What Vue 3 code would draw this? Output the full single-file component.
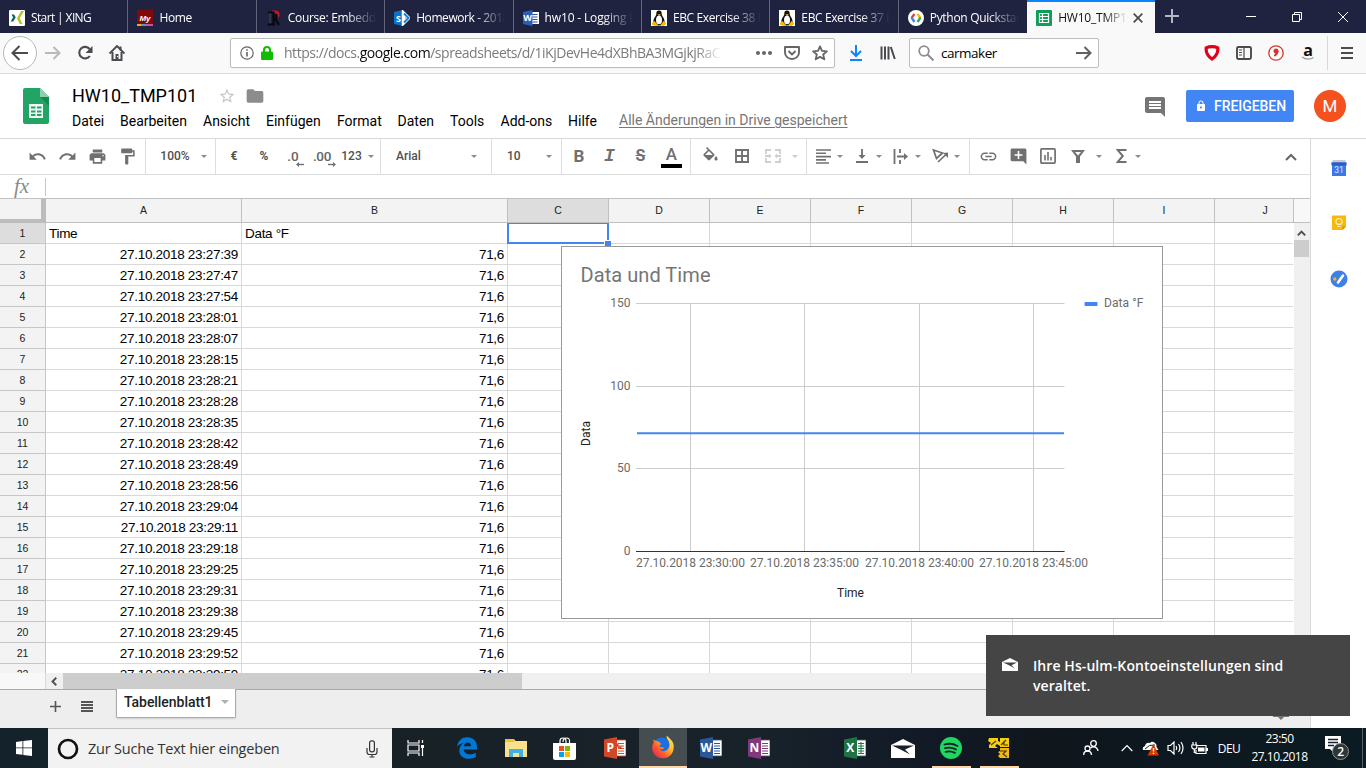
<script setup>
const tabs = [
  { t: 'Start | XING', k: 'xing', s: -0.62 },
  { t: 'Home', k: 'my', s: -0.35 },
  { t: 'Course: Embedded', k: 'rose', s: -0.3 },
  { t: 'Homework - 2018', k: 'share', s: -0.42 },
  { t: 'hw10 - Logging L', k: 'word', s: -0.15 },
  { t: 'EBC Exercise 38 Li', k: 'tux', s: -0.38 },
  { t: 'EBC Exercise 37 Li', k: 'tux', s: -0.38 },
  { t: 'Python Quickstart', k: 'goog', s: -0.3 }
]
const menus = ['Datei', 'Bearbeiten', 'Ansicht', 'Einfügen', 'Format', 'Daten', 'Tools', 'Add-ons', 'Hilfe']
const times = ['27:39', '27:47', '27:54', '28:01', '28:07', '28:15', '28:21', '28:28', '28:35', '28:42', '28:49', '28:56',
  '29:04', '29:11', '29:18', '29:25', '29:31', '29:38', '29:45', '29:52', '29:59']
const rows = [['Time', 'Data °F'], ...times.map(t => ['27.10.2018 23:' + t, '71,6'])]
const cols = ['A', 'B', 'C', 'D', 'E', 'F', 'G', 'H', 'I', 'J']
const xTicks = [[129, '27.10.2018 23:30:00'], [243, '27.10.2018 23:35:00'], [358, '27.10.2018 23:40:00'], [472, '27.10.2018 23:45:00']]
const yTicks = [[57, '150'], [140, '100'], [222, '50'], [305, '0']]
const p = {
  undo: 'M12.5 8c-2.65 0-5.05.99-6.9 2.6L2 7v9h9l-3.62-3.62c1.39-1.16 3.16-1.88 5.12-1.88 3.54 0 6.55 2.31 7.6 5.5l2.37-.78C21.08 11.03 17.15 8 12.5 8z',
  redo: 'M18.4 10.6C16.55 8.99 14.15 8 11.5 8c-4.65 0-8.58 3.03-9.96 7.22L3.9 16c1.05-3.19 4.05-5.5 7.6-5.5 1.95 0 3.73.72 5.12 1.88L13 16h9V7l-3.6 3.6z',
  print: 'M19 8H5c-1.66 0-3 1.34-3 3v6h4v4h12v-4h4v-6c0-1.66-1.34-3-3-3zm-3 11H8v-5h8v5zm3-7c-.55 0-1-.45-1-1s.45-1 1-1 1 .45 1 1-.45 1-1 1zm-1-9H6v4h12V3z',
  paint: 'M18 4V3c0-.55-.45-1-1-1H5c-.55 0-1 .45-1 1v4c0 .55.45 1 1 1h12c.55 0 1-.45 1-1V6h1v4H9v11c0 .55.45 1 1 1h2c.55 0 1-.45 1-1v-9h8V4h-3z',
  fill: 'M16.56 8.94L7.62 0 6.21 1.41l2.38 2.38-5.15 5.15c-.59.59-.59 1.54 0 2.12l5.5 5.5c.29.29.68.44 1.06.44s.77-.15 1.06-.44l5.5-5.5c.59-.58.59-1.53 0-2.12zM5.21 10L10 5.21 14.79 10H5.21zM19 11.5s-2 2.17-2 3.5c0 1.1.9 2 2 2s2-.9 2-2c0-1.33-2-3.5-2-3.5z',
  link: 'M3.9 12c0-1.71 1.39-3.1 3.1-3.1h4V7H7c-2.76 0-5 2.24-5 5s2.24 5 5 5h4v-1.9H7c-1.71 0-3.1-1.39-3.1-3.1zM8 13h8v-2H8v2zm9-6h-4v1.9h4c1.71 0 3.1 1.39 3.1 3.1s-1.39 3.1-3.1 3.1h-4V17h4c2.76 0 5-2.24 5-5s-2.24-5-5-5z',
  addc: 'M22 4c0-1.1-.9-2-2-2H4c-1.1 0-2 .9-2 2v12c0 1.1.9 2 2 2h14l4 4V4zM17 11h-4v4h-2v-4H7V9h4V5h2v4h4v2z',
  folder: 'M10 4H4c-1.1 0-1.99.9-1.99 2L2 18c0 1.1.9 2 2 2h16c1.1 0 2-.9 2-2V8c0-1.1-.9-2-2-2h-8l-2-2z',
  comment: 'M21.99 4c0-1.1-.89-2-1.99-2H4c-1.1 0-2 .9-2 2v12c0 1.1.9 2 2 2h14l4 4-.01-18zM18 14H6v-2h12v2zm0-3H6V9h12v2zm0-3H6V6h12v2z',
  lock: 'M18 8h-1V6c0-2.76-2.24-5-5-5S7 3.24 7 6v2H6c-1.1 0-2 .9-2 2v10c0 1.1.9 2 2 2h12c1.1 0 2-.9 2-2V10c0-1.1-.9-2-2-2zm-6 9c-1.1 0-2-.9-2-2s.9-2 2-2 2 .9 2 2-.9 2-2 2zm3.1-9H8.9V6c0-1.71 1.39-3.1 3.1-3.1 1.71 0 3.1 1.39 3.1 3.1v2z',
  star: 'M22 9.24l-7.19-.62L12 2 9.19 8.63 2 9.24l5.46 4.73L5.82 21 12 17.27 18.18 21l-1.63-7.03L22 9.24zM12 15.4l-3.76 2.27 1-4.28-3.32-2.88 4.38-.38L12 6.1l1.71 4.04 4.38.38-3.32 2.88 1 4.28L12 15.4z'
}
const office = {
  ppt: { c: '#d24726', l: 'P' },
  word: { c: '#2b579a', l: 'W' },
  one: { c: '#80397b', l: 'N' },
  excel: { c: '#1f7244', l: 'X' }
}
const apps = ['view', 'edge', 'files', 'store', 'ppt', 'fox', 'word', 'one', '', 'excel', 'mail', 'spot', 'vnc']
</script>

<template>
  <div class="screen">
    <div class="tabbar">
      <div v-for="(t, i) in tabs" :key="i" class="tab">
        <svg width="16" height="16" viewBox="0 0 16 16">
          <g v-if="t.k === 'xing'"><rect width="16" height="16" rx="1" fill="#fff" /><path d="M2.500 4.500h2.600l1.600 2.800L4.300 11.500H1.700l2.400-4.200z" fill="#0a6468" /><path d="M12.200 1H15l-4.300 7.200L13.500 14h-2.800L7.900 8.200z" fill="#b0c923" /></g>
          <g v-else-if="t.k === 'my'"><rect width="16" height="16" fill="#7e0a0e" /><text x="8" y="10.500" class="my">My</text><rect y="14" width="4" height="2" fill="#e8b020" /><rect x="4" y="14" width="4" height="2" fill="#4aa0c8" /><rect x="8" y="14" width="8" height="2" fill="#d0509a" /></g>
          <g v-else-if="t.k === 'rose'" fill="none"><path d="M6 2h4q3.500 1 1.500 5" stroke="#c41728" stroke-width="3" /><path d="M2 2.500h5.500v12M1.500 14.500h8M7 9h2.500l3.500 6M9 8.500q2.500-1 1-4.500" stroke="#08080c" stroke-width="2.200" /><path d="M4 3v10" stroke="#4a4b58" /></g>
          <g v-else-if="t.k === 'share'"><path d="M0 2L9 0v16l-9-2z" fill="#0a72c8" /><path d="M9.500 3l5 5-5 5z" fill="none" stroke="#fff" stroke-width="3.500" /><path d="M10 3.500l4.500 4.500L10 12.500" fill="none" stroke="#1580d4" stroke-width="2" /><text x="4.500" y="11.500" class="ic-l">S</text></g>
          <g v-else-if="t.k === 'word'"><path d="M8 2h8v12H8z" fill="#fff" /><path d="M9.500 4.500h5M9.500 7h5M9.500 9.500h5M9.500 12h5" stroke="#2b579a" /><path d="M0 2L9.500 0v16L0 14z" fill="#2b5fb4" /><text x="4.700" y="11" class="ic-l">W</text></g>
          <g v-else-if="t.k === 'tux'"><rect width="16" height="16" fill="#fff" /><path d="M8 .5c2.200 0 2.700 1.500 2.700 3.500 0 2 3 4 3 8.500 0 2-3 3-5.700 3s-5.700-1-5.700-3c0-4.500 3-6.500 3-8.500S5.800.5 8 .5z" fill="#111" /><ellipse cx="8" cy="10" rx="3" ry="4.300" fill="#fff" /><path d="M6.500 4.500L8.500 4l1.300 1-1.700 1.200z" fill="#f0b400" /><path d="M1 13l2.500-2 3.500 4-2 1-4-1zM15 13l-2.500-2-3 4 2.500 1 3-1.500z" fill="#f5bd00" /></g>
          <g v-else><circle cx="8" cy="8" r="8" fill="#fff" /><g fill="none" stroke-width="2.400"><path d="M6.500 4L3.500 8" stroke="#e94235" /><path d="M3.500 7.500l3 4.500" stroke="#4285f4" /><path d="M9.500 4l3 4" stroke="#fbbc05" /><path d="M12.500 7.500l-3 4.500" stroke="#34a853" /></g></g>
        </svg>
        <span class="tt" :style="{ letterSpacing: t.s + 'px' }">{{ t.t }}</span>
      </div>
      <div class="tab active">
        <svg width="16" height="16" viewBox="0 0 16 16"><rect width="16" height="16" rx="1" fill="#109d58" /><path d="M3.500 3.500h9v9h-9zM3.500 6.500h9M3.500 9.500h9M6.500 3.500v9" fill="none" stroke="#fff" stroke-width="1.200" /></svg>
        <span class="tt short">HW10_TMP101</span>
        <svg class="x" width="10" height="10" viewBox="0 0 10 10"><path d="M.7.7l8.600 8.600M9.300.7L.7 9.300" stroke="#4a4a4f" stroke-width="1.700" /></svg>
      </div>
      <svg class="plus" width="14" height="14" viewBox="0 0 14 14"><path d="M7 0v14M0 7h14" stroke="#b5b6c2" stroke-width="2" /></svg>
      <div class="wctl">
        <svg width="12" height="12" viewBox="0 0 12 12"><path d="M1 5.500h10" stroke="#fff" /></svg>
        <svg width="12" height="12" viewBox="0 0 12 12"><path d="M1.500 3.500h7v7h-7zM3.500 3V1.500h7v7H9" fill="none" stroke="#fff" /></svg>
        <svg width="12" height="12" viewBox="0 0 12 12"><path d="M1 1l10 10M11 1L1 11" stroke="#fff" /></svg>
      </div>
    </div>

    <div class="nav">
      <svg class="back" width="36" height="36" viewBox="0 0 36 36"><circle cx="18" cy="18" r="16.500" fill="#fff" stroke="#b8b8b8" /><path d="M26 18H11M17.500 11L10.500 18l7 7" fill="none" stroke="#4a4a4f" stroke-width="2" /></svg>
      <div class="navi">
        <svg width="16" height="16" viewBox="0 0 16 16"><path d="M0 8h14M8.500 2l6 6-6 6" fill="none" stroke="#b9b9bb" stroke-width="2" /></svg>
        <svg width="16" height="16" viewBox="0 0 16 16"><path d="M12.800 11A5.800 5.800 0 1 1 12.600 4" fill="none" stroke="#4a4a4f" stroke-width="2.100" /><path d="M15.500 1v7h-7z" fill="#4a4a4f" /></svg>
        <svg width="16" height="16" viewBox="0 0 16 16"><path d="M.5 8.500L8 1l7.500 7.500" fill="none" stroke="#4a4a4f" stroke-width="1.900" /><path d="M3.500 7v8h9V7M11.500 1.500v4" fill="none" stroke="#4a4a4f" stroke-width="2" /><path d="M6.500 9h3v6h-3z" fill="#4a4a4f" /><path d="M8 11.500h1" stroke="#fff" /></svg>
      </div>
      <div class="url">
        <svg width="14" height="14" viewBox="0 0 14 14"><circle cx="7" cy="7" r="6.200" fill="none" stroke="#656568" stroke-width="1.200" /><path d="M7 6v4.500M7 3.300v1.500" stroke="#656568" stroke-width="1.600" /></svg>
        <svg class="lk" width="14" height="14" viewBox="0 0 14 14"><rect x="1" y="5.500" width="12" height="8.500" rx="1" fill="#12bc00" /><path d="M4 6V4a3 3 0 0 1 6 0v2" fill="none" stroke="#12bc00" stroke-width="2" /></svg>
        <span class="ut">https://docs.<b>google.com</b>/spreadsheets/d/1iKjDevHe4dXBhBA3MGjkjRaC</span>
        <div class="ui">
          <svg width="16" height="16" viewBox="0 0 16 16" fill="#656568"><circle cx="2" cy="8" r="2" /><circle cx="8" cy="8" r="2" /><circle cx="14" cy="8" r="2" /></svg>
          <svg width="16" height="16" viewBox="0 0 16 16" fill="none" stroke="#656568" stroke-width="1.900"><path d="M1 2h14v5.500a7 6.500 0 0 1-14 0z" stroke-linejoin="round" /><path d="M4.500 6L8 9.500 11.500 6" /></svg>
          <svg width="16" height="16" viewBox="0 0 16 16"><path d="M8 1.400l2 4.400 4.900.5-3.700 3.200 1.100 4.800L8 11.900l-4.300 2.400 1.100-4.800L1.100 6.300 6 5.800z" fill="none" stroke="#656568" stroke-width="1.800" stroke-linejoin="round" /></svg>
        </div>
      </div>
      <svg class="dl" width="14" height="16" viewBox="0 0 14 16"><path d="M7 0v11M2 6l5 5 5-5M1 15h12" fill="none" stroke="#0a84ff" stroke-width="2" /></svg>
      <svg class="lib" width="16" height="16" viewBox="0 0 16 16"><path d="M1.500 1.500v13M5 1.500v13M8.500 1.500v13M10.800 2l4 12" stroke="#4a4a4f" stroke-width="2" /></svg>
      <div class="search">
        <svg width="16" height="16" viewBox="0 0 16 16"><circle cx="6" cy="6" r="4.800" fill="none" stroke="#8d8d8f" stroke-width="1.800" /><path d="M9.500 9.500l6 6" stroke="#8d8d8f" stroke-width="2" /></svg>
        <span>carmaker</span>
        <svg width="16" height="16" viewBox="0 0 16 16"><path d="M0 8h14M8.500 2l6 6-6 6" fill="none" stroke="#606064" stroke-width="2" /></svg>
      </div>
      <div class="ext">
        <svg width="16" height="16" viewBox="0 0 16 16"><path d="M8 1.700c2 0 3.800.2 5.800 1.200.5 4.500-1.800 8.400-5.800 11.100C4 11.300 1.700 7.400 2.200 2.900 4.200 1.900 6 1.700 8 1.700z" fill="#fff" stroke="#e2001a" stroke-width="3.200" /></svg>
        <svg width="16" height="16" viewBox="0 0 16 16"><rect x="1" y="2" width="14" height="12" rx="1.500" fill="none" stroke="#4a4a4f" stroke-width="1.900" /><path d="M8 2v12M3 5h3M3 7.500h3M3 10h3" stroke="#4a4a4f" stroke-width="1.200" /></svg>
        <svg width="16" height="16" viewBox="0 0 16 16"><circle cx="8" cy="8" r="7.200" fill="#fff" stroke="#d5352b" stroke-width="1.300" /><circle cx="8" cy="6" r="2.500" fill="#d5352b" /><path d="M9.500 6q0 3-3.200 5" stroke="#d5352b" stroke-width="2" fill="none" /></svg>
        <svg width="16" height="16" viewBox="0 0 16 16"><text x="8" y="10.500" class="amz">a</text><path d="M2 12q6 4 11.500.5" stroke="#999" stroke-width="1.400" fill="none" /></svg>
      </div>
      <div class="ham"><svg width="12" height="12" viewBox="0 0 12 12"><path d="M0 1h12M0 6h12M0 11h12" stroke="#4a4a4f" stroke-width="2" /></svg></div>
    </div>

    <div class="dochead">
      <svg class="logo" width="26" height="36" viewBox="0 0 26 36"><path d="M2 0h15l9 9v25a2 2 0 0 1-2 2H2a2 2 0 0 1-2-2V2a2 2 0 0 1 2-2z" fill="#21a464" /><path d="M17 9h9v9z" fill="#17884f" /><path d="M17 0l9 9h-9z" fill="#8dd0ae" /><path d="M6 16h14v14H6z" fill="#f2f8f4" /><path d="M8 19.500h4.500M14 19.500h4.500M8 23.500h4.500M14 23.500h4.500M8 27h4.500M14 27h4.500" stroke="#21a464" stroke-width="1.800" /></svg>
      <div class="dt">
        <div class="name"><span>HW10_TMP101</span>
          <svg width="18" height="18" viewBox="0 0 24 24" fill="#c6c6c6"><path :d="p.star" /></svg>
          <svg width="20" height="20" viewBox="0 0 24 24" fill="#8c8c8c"><path :d="p.folder" /></svg>
        </div>
        <div class="menu"><span v-for="m in menus" :key="m">{{ m }}</span><u>Alle Änderungen in Drive gespeichert</u></div>
      </div>
      <svg class="cm" width="24" height="24" viewBox="0 0 24 24" fill="#757575"><path :d="p.comment" /></svg>
      <div class="share"><svg width="12" height="12" viewBox="0 0 24 24" fill="#fff"><path :d="p.lock" /></svg><span>FREIGEBEN</span></div>
      <div class="ava">M</div>
    </div>

    <div class="body">
      <div class="main">
        <div class="tools">
          <div class="g g1"><svg v-for="k in ['undo', 'redo', 'print', 'paint']" :key="k" class="mi" viewBox="0 0 24 24"><path :d="p[k]" /></svg></div>
          <div class="g g2"><span>100%</span><i class="ar" /></div>
          <div class="g g3">
            <b>€</b><b>%</b>
            <span class="dec">.0<svg width="8" height="5" viewBox="0 0 8 5"><path d="M8 2.500H2" stroke="#707070" stroke-width="1.400" /><path d="M0 2.500L3 0v5z" fill="#707070" /></svg></span>
            <span class="dec two">.00<svg width="8" height="5" viewBox="0 0 8 5"><path d="M0 2.500h6" stroke="#707070" stroke-width="1.400" /><path d="M8 2.500L5 0v5z" fill="#707070" /></svg></span>
            <span>123</span><i class="ar" />
          </div>
          <div class="g g4"><span>Arial</span><i class="ar" /></div>
          <div class="g g5"><span>10</span><i class="ar" /></div>
          <div class="g g6"><span class="tb">B</span><span class="ti">I</span><span class="ts">S</span><span class="ta">A</span></div>
          <div class="g g7">
            <svg class="mi fl" viewBox="0 0 24 24"><path :d="p.fill" /></svg>
            <svg width="14" height="14" viewBox="0 0 14 14"><path d="M1 1h12v12H1zM7 1v12M1 7h12" fill="none" stroke="#707070" stroke-width="1.900" /></svg>
            <svg width="16" height="14" viewBox="0 0 16 14" fill="none" stroke="#cfcfcf" stroke-width="1.800"><path d="M1 5V1h5M10 1h5v4M1 9v4h5M10 13h5V9M0 7h5M16 7h-5" /><path d="M4 4.500L6.500 7 4 9.500zM12 4.500L9.500 7 12 9.500z" fill="#cfcfcf" stroke="none" /></svg>
            <i class="ar off" />
          </div>
          <div class="g g8">
            <svg width="15" height="15" viewBox="0 0 15 15"><path d="M0 1h15M0 4.300h10M0 7.600h15M0 10.900h10M0 14h13" stroke="#707070" stroke-width="1.600" /></svg><i class="ar" />
            <svg width="12" height="14" viewBox="0 0 12 14"><path d="M6 0v7M0 13h12" stroke="#707070" stroke-width="1.800" /><path d="M2.500 6h7L6 10z" fill="#707070" /></svg><i class="ar" />
            <svg width="16" height="15" viewBox="0 0 16 15"><path d="M1.500 0v15M7 0v4M7 11v4M4 7.500h8" stroke="#707070" stroke-width="1.800" /><path d="M11 4l4 3.500-4 3.500z" fill="#707070" /></svg><i class="ar" />
            <svg width="17" height="16" viewBox="0 0 17 16"><path d="M1.500 2l9 3-6 5.500zM6 14L14.500 6" fill="none" stroke="#707070" stroke-width="1.700" /><path d="M16 4.500V10l-5-5z" fill="#707070" /></svg><i class="ar" />
          </div>
          <div class="g g9">
            <svg class="mi" viewBox="0 0 24 24"><path :d="p.link" /></svg>
            <svg class="mi" viewBox="0 0 24 24"><path :d="p.addc" /></svg>
            <svg width="16" height="16" viewBox="0 0 16 16"><rect x=".9" y=".9" width="14.200" height="14.200" rx="1" fill="none" stroke="#707070" stroke-width="1.700" /><path d="M5 7v5.500M8 4v8.500M11 9v3.500" stroke="#707070" stroke-width="1.600" /></svg>
            <svg width="14" height="13" viewBox="0 0 14 13"><path d="M0 0h14L9 6.500V13H5V6.500z" fill="#707070" /><path d="M4 2h6L7 5.500z" fill="#fff" /></svg><i class="ar" />
            <svg width="11" height="14" viewBox="0 0 11 14"><path d="M10.500 1.100H1.800L6.800 7l-5 5.900h8.700" fill="none" stroke="#707070" stroke-width="2" /></svg><i class="ar" />
          </div>
          <svg class="col" width="12" height="8" viewBox="0 0 12 8"><path d="M1 7l5-5 5 5" fill="none" stroke="#666" stroke-width="2" /></svg>
        </div>
        <div class="fx"><span>fx</span></div>
        <div class="sheet">
          <div class="row head"><div class="corner" /><div v-for="c in cols" :key="c" :class="{ sel: c === 'C' }">{{ c }}</div><div class="hgap" /></div>
          <div class="vwrap">
            <div class="grid">
              <div v-for="(r, i) in rows" :key="i" class="row data" :class="{ first: i === 0 }">
                <div class="rh">{{ i + 1 }}</div><div>{{ r[0] }}</div><div>{{ r[1] }}</div><div v-for="n in 8" :key="n" />
              </div>
              <div class="cur"><i /></div>
            </div>
            <div class="vs"><svg width="9" height="6" viewBox="0 0 9 6"><path d="M.8 5.300l3.700-3.800 3.700 3.800" fill="none" stroke="#505050" stroke-width="1.900" /></svg><i /></div>
          </div>
          <div class="hs"><div class="hl" /><svg width="6" height="9" viewBox="0 0 6 9"><path d="M5.300.8L1.500 4.500l3.800 3.700" fill="none" stroke="#505050" stroke-width="1.900" /></svg><i /></div>
          <svg class="chart" width="602" height="373" viewBox="0 0 602 373">
            <rect x=".5" y=".5" width="601" height="372" fill="#fff" stroke="#999" />
            <text x="19.500" y="35.500" class="ct" textLength="130">Data und Time</text>
            <g stroke="#ccc"><path v-for="t in xTicks" :key="t[0]" :d="`M${t[0] + .5} 57v248`" /><path v-for="t in yTicks" :key="t[0]" :d="`M75 ${t[0] + .5}h428.500`" /></g>
            <path d="M75 305.500h428.500" stroke="#333" />
            <path d="M76 187.300h427" stroke="#4285f4" stroke-width="2" />
            <text v-for="t in yTicks" :key="t[1]" x="69.500" :y="t[0] + 4" class="tk end">{{ t[1] }}</text>
            <text v-for="t in xTicks" :key="t[1]" :x="t[0] + .5" y="321" class="tk mid" textLength="109">{{ t[1] }}</text>
            <rect x="523.500" y="56" width="13" height="4" rx="1" fill="#4285f4" />
            <text x="543" y="61" class="tk" textLength="39.500">Data °F</text>
            <text x="289.500" y="351" class="tk mid dk">Time</text>
            <text transform="translate(29 187.500) rotate(-90)" class="tk mid dk">Data</text>
          </svg>
        </div>
        <div class="sbar">
          <svg class="pl" width="11" height="11" viewBox="0 0 11 11"><path d="M5.500 0v11M0 5.500h11" stroke="#555" stroke-width="1.600" /></svg>
          <svg class="li" width="12" height="11" viewBox="0 0 12 11"><path d="M0 1h12M0 4h12M0 7h12M0 10h12" stroke="#555" stroke-width="1.800" /></svg>
          <div class="stab">Tabellenblatt1<i class="ar" /></div>
          <svg class="peek" width="16" height="16" viewBox="0 0 16 16"><path d="M0 0h16v13h-5l-3 3-3-3H0z" fill="#757575" /></svg>
        </div>
      </div>
      <div class="side">
        <svg width="16" height="16" viewBox="0 0 16 16"><rect x="1.500" width="13" height="4" fill="#c5c9d0" /><path d="M.5 2.500h15L15 5v11H1V5z" fill="#3b78e7" /><rect x=".5" y="2.500" width="15" height="3" fill="#2a5bc8" /><text x="8" y="12.800" class="cal">31</text></svg>
        <svg width="16" height="16" viewBox="0 0 16 16"><path d="M1 .5h14v11L11.500 15H1z" fill="#f8b90b" /><path d="M15 11.500h-3.500V15z" fill="#d98e00" /><path d="M6.300 9.300C3.500 7 5 3.500 8 3.500s4.500 3.500 1.700 5.800zM6.500 11.500h3" fill="none" stroke="#fff1c0" stroke-width="1.200" /></svg>
        <svg width="18" height="18" viewBox="0 0 18 18"><circle cx="9" cy="9" r="8.500" fill="#3f7fe8" /><path d="M8 12.500L13 5.500" stroke="#fff" stroke-width="2.600" stroke-linecap="round" /><circle cx="4.800" cy="9" r="1.700" fill="#f6b70c" /></svg>
      </div>
    </div>

    <div class="task">
      <div class="start"><svg width="16" height="16" viewBox="0 0 16 16" fill="#fff"><path d="M0 2l6.500-.9v6.500H0zM7.300 1L16 0v7.600H7.300zM0 8.300h6.500v6.500L0 14zM7.300 8.300H16V16l-8.700-1.100z" /></svg></div>
      <div class="cort"><svg width="22" height="22" viewBox="0 0 22 22"><circle cx="11" cy="11" r="9" fill="none" stroke="#111" stroke-width="2.700" /></svg><span>Zur Suche Text hier eingeben</span>
        <svg width="12" height="18" viewBox="0 0 12 18" fill="none" stroke="#333" stroke-width="1.200"><rect x="3.600" y=".8" width="4.800" height="11" rx="2" /><path d="M1 8v4q0 2.500 2.500 2.500h5Q11 14.500 11 12V8M6 14.500V17M3.500 17h5" /></svg></div>
      <div class="apps">
        <div v-for="(a, i) in apps" :key="i" :class="['app', a]">
          <svg v-if="office[a]" width="22" height="22" viewBox="0 0 22 22"><rect x="11" y="3" width="11" height="16" fill="#fff" stroke-width=".8" :stroke="office[a].c" /><path d="M14 6.500h6M14 9h6M14 11.500h6M14 14h6M14 16.500h6" :stroke="office[a].c" /><path v-if="a === 'ppt'" d="M14.500 5.500a3 3 0 1 0 4 4h-4z" :fill="office[a].c" /><path v-if="a === 'excel'" d="M17 5v12" :stroke="office[a].c" /><path d="M0 2.500L13 0v22L0 19.500z" :fill="office[a].c" /><text x="6.300" y="15.200" class="ol">{{ office[a].l }}</text></svg>
          <svg v-else-if="a === 'view'" width="18" height="16" viewBox="0 0 18 16" fill="none" stroke="#fff" stroke-width="1.200"><path d="M1 0v3h11V0M1 16v-3h11v3M1 5h11v6H1zM15.500 0v3M15.500 8v8" /><path d="M14 5h3v3h-3z" fill="#fff" stroke="none" /></svg>
          <svg v-else-if="a === 'edge'" width="20" height="22" viewBox="0 0 20 22"><path d="M0 9.700C1.200 3.500 5 .3 10.200.3 16.200.3 20 4.500 20 10v2.500H6.700c.3 3.400 3 4.900 6.100 4.900 2.300 0 4.200-.6 6-1.700v4.400c-2 1.100-4.400 1.700-7 1.700-5.500 0-9.500-3-9.500-8.300 0-3.300 1.700-6 4.900-7.400C3.800 6.500 1.500 7.800 0 9.700zM6.900 9.200h7.200c0-2.100-1.200-3.700-3.500-3.700-2 0-3.300 1.300-3.700 3.700z" fill="#0078d7" /></svg>
          <svg v-else-if="a === 'files'" width="22" height="20" viewBox="0 0 22 20"><path d="M0 1h9l1.500 2H22v16H0z" fill="#fbe08b" /><path d="M0 1h9v3H0z" fill="#f1c232" /><path d="M4 11h14v8h-4v-4H8v4H4z" fill="#3fb2e3" /></svg>
          <svg v-else-if="a === 'store'" width="23" height="23" viewBox="0 0 23 23"><path d="M7 7V4q0-3 3-3t3 3v3M10 5q0-4 3.500-4t3 4v2" fill="none" stroke="#fff" stroke-width="1.200" /><path d="M0 6h23v15q0 2-2 2H2q-2 0-2-2z" fill="#fff" /><path d="M6 9h5v5H6z" fill="#f25022" /><path d="M12 9h5v5h-5z" fill="#7fba00" /><path d="M6 15h5v5H6z" fill="#00a4ef" /><path d="M12 15h5v5h-5z" fill="#ffb900" /></svg>
          <svg v-else-if="a === 'fox'" width="24" height="24" viewBox="0 0 24 24"><defs><linearGradient id="fx" x1="1" y1="0" x2="0" y2="1"><stop offset="0" stop-color="#fff36a" /><stop offset=".35" stop-color="#ffbd2e" /><stop offset=".65" stop-color="#ff5a2b" /><stop offset="1" stop-color="#e2126e" /></linearGradient></defs><circle cx="11" cy="11" r="8.500" fill="#1c6fe0" /><path d="M2.500 4.500c-.3 1.200 0 2 .2 2.800C-1.500 15 3.500 23.300 12 23.300S24 15 22.300 8.500C21.400 5 18 3 15.500.5c0 2 .4 3.200 1.700 4.800 2.500 4 1.300 9.500-3.500 10.800-2.600.5-4.500-.7-5.300-2 2 .9 3.500-.2 4.700-.9-.6-1.400-2.800-1.200-4-1.300-1-.6-.6-1.800 1.400-2.900C9.500 8 8.500 7.500 7.800 6.400 5.500 6 4 5.800 2.500 4.500z" fill="url(#fx)" /></svg>
          <svg v-else-if="a === 'mail'" width="24" height="19" viewBox="0 0 24 19"><path d="M0 6L12 0l12 6v13H0z" fill="#fff" /><path d="M1 6.500l22 0-9 4 5 5L9.500 10.500z" fill="#17202a" /></svg>
          <svg v-else-if="a === 'spot'" width="22" height="22" viewBox="0 0 22 22"><circle cx="11" cy="11" r="11" fill="#1ed760" /><path d="M4.500 7.500q7-2 13 1.500M5 11.200q6-1.700 11 1.300M5.600 14.800q5-1.300 9.300 1.100" fill="none" stroke="#14232b" stroke-width="1.800" stroke-linecap="round" /></svg>
          <svg v-else-if="a === 'vnc'" width="22" height="22" viewBox="0 0 22 22"><path d="M1 1h9v3l2 1V1h9v9h-9V9L9 7 7 9l3 2H1V8l2-2-3-2z" fill="#f6cf13" /><path d="M12 11h9v10h-9l-2-2 2-2-2-2 2-1z" fill="#f2b71a" /><path d="M3 8l5-4M13 8l5-5M16 4v4h4M12 14h6l-3 3 4 3" fill="none" stroke="#4a3a05" stroke-width="1.200" /></svg>
        </div>
      </div>
      <div class="tray">
        <svg width="16" height="16" viewBox="0 0 16 16" fill="none" stroke="#fff" stroke-width="1.300"><circle cx="4.500" cy="8.500" r="2.500" /><path d="M.7 15q0-4 3.800-4t4 4" /><circle cx="10.500" cy="3.500" r="2.800" /><path d="M7.500 8q3-2.500 6 0 1.300 1.200 1.500 3" /></svg>
        <svg width="12" height="8" viewBox="0 0 12 8"><path d="M.7 7L6 1.500 11.300 7" fill="none" stroke="#fff" stroke-width="1.200" /></svg>
        <svg width="18" height="16" viewBox="0 0 18 16"><path d="M1 10Q0 7 3 6q1-4 5-3 2-2.500 5 0 2 1 1.500 4l2 3H4z" fill="#fff" /><path d="M3 9q4-5 10-4" stroke="#14232b" fill="none" /><path d="M11.500 4L17 15.500H5.500z" fill="#d83b01" /><path d="M11.500 8v3.500M11.500 12.800V14" stroke="#fff" stroke-width="1.400" /></svg>
        <svg width="17" height="14" viewBox="0 0 17 14" fill="none" stroke="#fff" stroke-width="1.200"><path d="M1 4.500h2.500L7 1v12L3.500 9.500H1zM9 5q1.300 2 0 4M11.500 3q2.800 4 0 8M14 1q4 6 0 12" /></svg>
        <svg width="17" height="13" viewBox="0 0 17 13" fill="none" stroke="#fff" stroke-width="1.200"><path d="M5 3.500h10v8H5V8" /><path d="M7 5.500h6.500v4H7zM15 6h2v3h-2z" fill="#fff" stroke="none" /><path d="M2 0v2.500M5 0v2.500M.8 3h5v2q0 2-2.400 2T.8 5zM3.300 7v3.500H5" /></svg>
        <span class="lang">DEU</span>
        <div class="clock"><span>23:50</span><span>27.10.2018</span></div>
        <svg width="24" height="24" viewBox="0 0 24 24"><path d="M0 0h16v13H8v3l-3-3H0z" fill="#fff" /><path d="M3 3.500h10M3 6.500h10M3 9.500h6" stroke="#14232b" stroke-width="1.300" /><circle cx="15.500" cy="15.500" r="8" fill="#2f3638" stroke="#8d9294" /><text x="15.500" y="20" class="nb">2</text></svg>
      </div>
    </div>

    <div class="toast">
      <svg width="16" height="13" viewBox="0 0 16 13"><path d="M0 4l8-4 8 4v9H0z" fill="#fff" /><path d="M1 4.500h14l-5.500 2.700 3.500 3.300-6.500-3.400z" fill="#444" /></svg>
      <div>Ihre Hs-ulm-Kontoeinstellungen sind<br>veraltet.</div>
    </div>
  </div>
</template>

<style>
body { margin: 0; overflow: hidden; }
</style>

<style scoped>
* { box-sizing: border-box; }
svg { display: block; flex: none; }
.screen { position: relative; width: 1366px; height: 768px; overflow: hidden; display: flex; flex-direction: column; background: #fff; font-family: "Open Sans", "Noto Sans", sans-serif; color: #000; }

.tabbar { height: 33px; background: #202340; display: flex; flex: none; }
.tab { width: 128.400px; height: 33px; border-right: 1px solid #63657a; padding: 2px 8px 0 9px; display: flex; align-items: center; color: #fff; }
.tab:nth-child(8) { border-right: 0; }
.tab.active { width: 128px; background: #f9f9fa; border: 0; border-top: 2px solid #0a84ff; color: #111; padding-top: 0; }
.tt { margin-left: 6px; width: 89px; overflow: hidden; white-space: nowrap; font-size: 12px; line-height: 18px; -webkit-mask-image: linear-gradient(90deg, #000 66%, transparent 100%); mask-image: linear-gradient(90deg, #000 66%, transparent 100%); }
.tt.short { width: 70px; letter-spacing: -.2px; }
.x { margin-left: 5px; }
.plus { margin: 9px 0 0 10px; }
.wctl { margin: 11px 9px 0 auto; display: flex; gap: 34px; padding-right: 8px; }
.my { font: italic bold 8px "Liberation Sans", sans-serif; fill: #fff; text-anchor: middle; }
.ic-l { font: bold 9px "Open Sans", sans-serif; fill: #fff; text-anchor: middle; }

.nav { height: 41px; flex: none; background: #f9f9fa; border-bottom: 1px solid #dcdcdc; display: flex; align-items: center; }
.back { margin-left: 2px; }
.navi { display: flex; gap: 16px; margin-left: 7px; width: 185px; }
.url { width: 605px; height: 30px; border: 1px solid #bdbdbe; border-radius: 2px; background: #fff; display: flex; align-items: center; padding-left: 9px; box-shadow: 0 1px 3px #0000000a; }
.lk { margin-left: 6px; }
.ut { margin-left: 10px; width: 438px; white-space: nowrap; overflow: hidden; font-size: 14px; color: #7b7b7e; line-height: 20px; letter-spacing: -.47px; -webkit-mask-image: linear-gradient(90deg, #000 94%, transparent 100%); mask-image: linear-gradient(90deg, #000 94%, transparent 100%); }
.ut b { font-weight: 400; color: #0c0c0d; }
.ui { display: flex; gap: 12px; margin-left: 34px; }
.dl { margin-left: 14px; }
.lib { margin-left: 17px; }
.search { margin-left: 13px; width: 190px; height: 30px; border: 1px solid #bdbdbe; border-radius: 2px; background: #fff; display: flex; align-items: center; padding-left: 8px; font-size: 13.500px; letter-spacing: -.48px; }
.search span { margin-left: 7px; width: 135px; }
.ext { display: flex; gap: 16px; margin-left: 105px; }
.ham { margin-left: 11px; height: 34px; border-left: 1px solid #d8d8d9; padding: 11px 0 0 13px; }
.amz { font: bold 16px "Open Sans", sans-serif; text-anchor: middle; fill: #111; }

.dochead { height: 65px; flex: none; display: flex; border-bottom: 1px solid #d9d9d9; font-family: Roboto, sans-serif; }
.logo { margin: 14px 0 0 23px; }
.dt { margin-left: 23px; width: 1071px; }
.name { display: flex; align-items: center; height: 24px; margin-top: 10px; font-size: 18px; }
.name span { width: 146px; padding-bottom: 2px; }
.name svg + svg { margin-left: 9px; }
.menu { display: grid; grid-template-columns: 48px 83px 63px 71px 60.500px 52.500px 50.500px 67.500px 51px auto; font-size: 14px; line-height: 20px; margin-top: 3px; white-space: nowrap; }
.menu u { color: #777; position: relative; top: -1px; text-underline-offset: 2px; }
.cm { margin-top: 21px; }
.share { margin: 16px 0 0 19px; width: 108px; height: 32px; background: #4285f4; border-radius: 2px; color: #fff; display: flex; align-items: center; padding-left: 9px; font-size: 14px; font-weight: 500; }
.share span { margin-left: 7px; letter-spacing: -.05px; }
.ava { margin: 16px 0 0 20px; width: 32px; height: 32px; border-radius: 50%; background: #f4511e; color: #fff; font-size: 17px; line-height: 32px; text-align: center; }

.body { display: flex; height: 589px; flex: none; }
.main { width: 1310px; display: flex; flex-direction: column; }
.side { width: 56px; border-left: 1px solid #d9d9d9; display: flex; flex-direction: column; align-items: center; gap: 39px; padding-top: 21px; }
.cal { font: 8.500px Roboto, sans-serif; fill: #dfe9ff; text-anchor: middle; }

.tools { height: 36px; flex: none; border-bottom: 1px solid #dedede; display: flex; align-items: center; font: 500 12px Roboto, sans-serif; color: #505050; }
.g { height: 35px; display: grid; align-items: center; justify-items: center; justify-content: start; border-right: 1px solid #dedede; flex: none; }
.g > * { position: relative; top: -.5px; }
.mi { width: 19px; height: 19px; fill: #707070; }
.ar { width: 0; height: 0; border: 3px solid transparent; border-top: 3.500px solid #8c8c8c; border-bottom: 0; }
.ar.off { border-top-color: #ccc; }
.g1 { width: 146px; padding-left: 22px; grid-template-columns: repeat(4, 30px); }
.g2 { width: 70px; padding-left: 5px; grid-template-columns: 48px 9px; }
.g3 { width: 165px; padding-left: 3px; grid-template-columns: 30px 30px 28px 30px 29px 10px; }
.g > span { padding-bottom: 1px; }
.g3 b { font-weight: 700; font-size: 12px; }
.dec { font-size: 13.500px; color: #666; }
.dec.two { letter-spacing: -.3px; }
.dec svg { position: absolute; right: -5px; bottom: -2px; }
.g4 { width: 111px; padding-left: 15px; grid-template-columns: 73px 10px; justify-items: start; }
.g5 { width: 70px; padding-left: 15px; grid-template-columns: 37px 10px; justify-items: start; }
.g4 .ar, .g5 .ar { justify-self: center; }
.g6 { width: 129px; padding-left: 2px; grid-template-columns: 30px 31px 31px 31px; color: #707070; }
.tb { font: bold 17px/18px Roboto, sans-serif; }
.ti { font: italic bold 18px/18px "Liberation Mono", monospace; }
.g > .ts { font: bold 16px/18px Roboto, sans-serif; text-decoration: line-through; padding: 0 2px 1px; }
.g > .ta { font: 500 17px/16px Roboto, sans-serif; width: 21px; text-align: center; border-bottom: 4px solid #000; height: 22px; padding: 0; top: 0; }
.g7 { width: 116px; padding-left: 4px; grid-template-columns: 31px 31px 31px 13px; }
.g8 { width: 163px; padding-left: 4px; grid-template-columns: 24px 15px 24px 15px 24px 15px 24px 10px; }
.g8 .ar { justify-self: start; margin-left: 2px; }
.g9 { width: 290px; border: 0; padding-left: 3px; grid-template-columns: 30px 30px 30px 30px 12px 32px 2px; }
.col { margin-left: 25px; }

.fx { height: 24px; flex: none; border-bottom: 1px solid #c0c0c0; padding-top: 3px; }
.fx span { display: block; width: 46px; height: 18px; border-right: 1px solid #c8c8c8; padding-left: 14px; font: italic 21px/17px "Liberation Serif", serif; color: #8a8a8a; }
.sheet { position: relative; height: 490px; flex: none; font-family: "Liberation Sans", Arial, sans-serif; }
.row { display: grid; grid-template-columns: 46px 196px 266px 101px 101px 101px 101px 101px 101px 101px 78px; }
.head { grid-template-columns: 46px 196px 266px 101px 101px 101px 101px 101px 101px 101px 79px 16px; grid-template-rows: 24px; height: 24px; width: 1310px; overflow: hidden; font-size: 10.500px; line-height: 23px; text-align: center; color: #222; }
.head > div { border: solid #c0c0c0; border-width: 0 1px 1px 0; background: #f3f3f3; }
.head > div.sel { background: #ddd; }
.head > div.corner { border-width: 0 5px 4px 0; border-color: #bcbcbc; }
.head > div:nth-child(11) { padding-left: 22px; }
.head > div.hgap { background: #f8f8f8; border-right: 0; }
.vwrap { display: flex; height: 450px; }
.grid { position: relative; width: 1293px; overflow: hidden; }
.data > div { height: 21px; border: solid #d9d9d9; border-width: 0 1px 1px 0; font-size: 13.500px; letter-spacing: -.3px; line-height: 21px; padding: 0 3px; text-align: right; white-space: nowrap; }
.data > div:last-child { border-right: 0; }
.data.first > div { text-align: left; }
.data > div.rh { background: #f3f3f3; font-size: 10.500px; letter-spacing: 0; text-align: center; color: #222; border-color: #c6c6c6; padding: 0; }
.data.first > div.rh { background: #ddd; text-align: center; }
.cur { position: absolute; left: 507px; top: 0; width: 102px; height: 21px; border: 2px solid #4285f4; border-top-width: 1px; }
.cur i { position: absolute; right: -4px; bottom: -5px; width: 7px; height: 7px; background: #4285f4; border: 1px solid #fff; border-width: 1px 0 0 1px; }
.vs { margin-left: 1px; width: 16px; background: #f0f0f0; }
.vs svg { margin: 7px 0 4px 3px; }
.vs i { display: block; width: 15px; height: 17px; background: #cdcdcd; }
.hs { height: 16px; display: flex; align-items: center; background: #f0f0f0; width: 1310px; }
.hl { width: 46px; height: 16px; background: #f8f8f8; border-right: 1px solid #d9d9d9; }
.hs svg { margin: 0 6px 0 5px; }
.hs i { width: 459px; height: 16px; background: #cdcdcd; }
.chart { position: absolute; left: 561px; top: 47px; font-family: Roboto, sans-serif; }
.ct { font-size: 20px; fill: #757575; }
.tk { font-size: 12px; fill: #6b6b6b; }
.mid { text-anchor: middle; }
.end { text-anchor: end; }
.dk { fill: #222; }

.sbar { position: relative; height: 39px; flex: none; background: #eee; border-top: 1px solid #a9a9a9; display: flex; }
.pl { margin: 11px 0 0 50px; }
.li { margin: 11px 0 0 20px; }
.stab { margin: -1px 0 0 23px; width: 120px; height: 29px; background: #fff; border: 1px solid #a9a9a9; border-top: 0; border-radius: 0 0 2px 2px; box-shadow: 0 1px 2px #0002; display: flex; align-items: center; font: 500 14px Roboto, sans-serif; color: #222; padding: 0 0 2px 7px; letter-spacing: -.05px; }
.stab .ar { border-width: 4px 4px 0; margin-left: 8px; border-top-color: #b0b0b0; }
.peek { margin: 14px 0 0 1037px; }

.task { height: 40px; flex: none; display: flex; background: linear-gradient(90deg, #14232b 0, #182126 400px, #18222a 760px, #121a26 920px, #10161c 1040px, #0d1820 1180px, #0b1b22); }
.start { width: 48px; display: grid; place-items: center; }
.cort { width: 344px; background: #f2f2f2; border-top: 1px solid #c4c4c4; display: flex; align-items: center; padding-left: 9px; color: #333; font-size: 14.500px; }
.cort span { margin-left: 9px; width: 278px; letter-spacing: -.2px; white-space: nowrap; }
.apps { display: grid; grid-template-columns: 48px 54px 44px 53px repeat(9, 48px); }
.app { display: grid; place-items: center; }
.fox { background: #454d50; border-bottom: 2px solid #fdd7a8; }
.spot, .vnc { background: linear-gradient(#fdd7a8, #fdd7a8) center bottom / 39px 2px no-repeat; }
.ol { font: bold 12px "Open Sans", sans-serif; fill: #fff; text-anchor: middle; }
.tray { margin-left: 50px; width: 290px; border-right: 1px solid #566066; display: grid; grid-template-columns: 36px 36px 12px 36px 12px 42px 65px 50px; align-items: center; justify-items: center; color: #fff; font-size: 12px; letter-spacing: -.5px; }
.lang { padding-left: 6px; }
.clock { display: flex; flex-direction: column; align-items: center; line-height: 18px; height: 37px; }
.nb { font: 600 12px "Open Sans", sans-serif; fill: #fff; text-anchor: middle; }

.toast { position: absolute; left: 986px; top: 635px; width: 364px; height: 81px; background: #454545; color: #fff; font-weight: 600; font-size: 14px; line-height: 20px; letter-spacing: .08px; display: flex; padding: 21px 0 0 16px; gap: 15px; white-space: nowrap; }
.toast svg { margin-top: 2px; }
</style>
